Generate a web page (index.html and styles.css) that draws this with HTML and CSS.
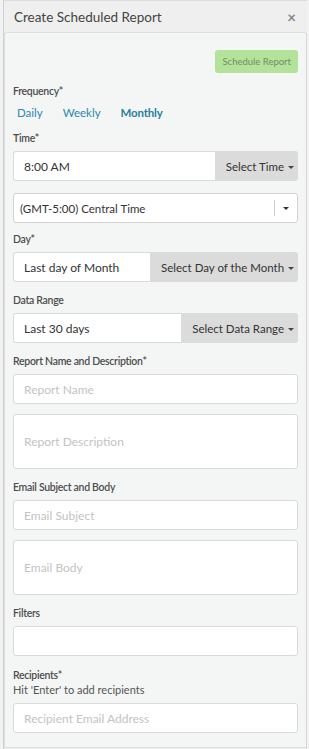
FILE: index.html
```html
<!DOCTYPE html>
<html lang="en">
<head>
    <meta charset="UTF-8">
    <meta name="viewport" content="width=device-width, initial-scale=1.0">
    <title>Create Scheduled Report</title>
    <link rel="stylesheet" href="styles.css">
</head>
<body>
    <div class="panel">
        <div class="panel-header">
            <span class="panel-title">Create Scheduled Report</span>
            <span class="close">&times;</span>
        </div>

        <div class="panel-body">
            <div class="actions">
                <button class="btn-schedule">Schedule Report</button>
            </div>

            <label class="field-label">Frequency*</label>
            <div class="tabs">
                <a class="tab">Daily</a>
                <a class="tab">Weekly</a>
                <a class="tab active">Monthly</a>
            </div>

            <label class="field-label">Time*</label>
            <div class="input-group">
                <input type="text" value="8:00 AM">
                <button class="btn-drop">Select Time <span class="caret"></span></button>
            </div>
            <div class="select">
                <span class="select-text">(GMT-5:00) Central Time</span>
                <span class="select-sep"></span>
                <span class="caret dark"></span>
            </div>

            <label class="field-label">Day*</label>
            <div class="input-group">
                <input type="text" value="Last day of Month">
                <button class="btn-drop">Select Day of the Month <span class="caret"></span></button>
            </div>

            <label class="field-label">Data Range</label>
            <div class="input-group">
                <input type="text" value="Last 30 days">
                <button class="btn-drop">Select Data Range <span class="caret"></span></button>
            </div>

            <label class="field-label">Report Name and Description*</label>
            <input class="field" type="text" placeholder="Report Name">
            <textarea class="field area" placeholder="Report Description"></textarea>

            <label class="field-label">Email Subject and Body</label>
            <input class="field" type="text" placeholder="Email Subject">
            <textarea class="field area" placeholder="Email Body"></textarea>

            <label class="field-label">Filters</label>
            <input class="field" type="text">

            <label class="field-label tight">Recipients*</label>
            <div class="hint">Hit 'Enter' to add recipients</div>
            <input class="field" type="text" placeholder="Recipient Email Address">
        </div>
    </div>
</body>
</html>
```

FILE: styles.css
```css
body {
    margin: 0;
    background-color: #f2f2f2;
    font-family: Lato, "Liberation Sans", sans-serif;
    color: #444;
}
.panel {
    width: 303px;
    margin-left: 3px;
    border-left: 1px solid #d0d0d0;
    border-top: 1px solid #dcdcdc;
    height: 748px;
    background-color: #efefef;
}
.panel-header {
    display: flex;
    justify-content: space-between;
    align-items: center;
    height: 31px;
    padding: 0 11px 0 10px;
    background-color: #efefef;
}
.panel-title {
    font-size: 13.5px;
    color: #444;
}
.close {
    font-size: 15px;
    color: #888;
    font-weight: bold;
}
.panel-body {
    background-color: #f4f5f5;
    border: 1px solid #dedede;
    border-right: 1px solid #d6d6d6;
    border-radius: 3px 3px 0 0;
    padding: 17px 8px 0 8px;
    height: 716px;
    box-sizing: border-box;
    display: flex;
    flex-direction: column;
}
.actions {
    display: flex;
    justify-content: flex-end;
    margin-bottom: 12px;
}
.btn-schedule {
    background-color: #b3e29b;
    color: #6f8f66;
    border: none;
    border-radius: 3px;
    font-family: inherit;
    font-size: 9.5px;
    height: 23px;
    padding: 0 7px;
}
.field-label {
    font-size: 10.5px;
    font-weight: 600;
    letter-spacing: -0.3px;
    color: #4d4d4d;
    margin-bottom: 7px;
}
.field:not(.area) + .field-label {
    margin-top: 3px;
}
.field-label.tight {
    margin-bottom: 2px;
}
.hint {
    font-size: 11px;
    color: #555;
    margin-bottom: 7px;
}
.tabs {
    display: flex;
    margin: 2px 0 13px 0;
}
.tab {
    font-size: 11.5px;
    color: #2f88ad;
    padding: 0 4px;
    margin-right: 12px;
}
.tab.active {
    font-weight: bold;
    color: #2b7fa3;
    letter-spacing: -0.2px;
}
.input-group {
    display: flex;
    height: 30px;
    margin-bottom: 12px;
}
.input-group input {
    flex: 1;
    min-width: 0;
    border: 1px solid #dadada;
    border-right: none;
    border-radius: 3px 0 0 3px;
    padding: 0 10px;
    font-family: inherit;
    font-size: 12px;
    color: #333;
    background-color: #fff;
}
.btn-drop {
    background-color: #dcdbdb;
    border: none;
    border-radius: 0 3px 3px 0;
    font-family: inherit;
    font-size: 11.5px;
    color: #333;
    padding: 0 4px 0 11px;
    white-space: nowrap;
}
.caret {
    display: inline-block;
    width: 0;
    height: 0;
    border-left: 3px solid transparent;
    border-right: 3px solid transparent;
    border-top: 3px solid #444;
    vertical-align: middle;
    margin-left: 1px;
}
.select {
    display: flex;
    align-items: center;
    height: 28px;
    border: 1px solid #d2d2d2;
    border-radius: 3px;
    background-color: #fff;
    padding: 0 8px 0 6px;
    margin-bottom: 10px;
    font-size: 11.5px;
    color: #333;
}
.select-text {
    flex: 1;
}
.select-sep {
    width: 1px;
    height: 16px;
    background-color: #ccc;
    margin-right: 7px;
}
.caret.dark {
    border-top-color: #333;
}
.field {
    height: 30px;
    border: 1px solid #dadada;
    border-radius: 3px;
    background-color: #fff;
    padding: 0 10px;
    font-family: inherit;
    font-size: 12px;
    box-sizing: border-box;
    margin: 0 0 10px 0;
    width: 100%;
}
.field.area {
    height: 55px;
    resize: none;
    padding-top: 19px;
    margin-bottom: 12px;
}
.field::placeholder {
    color: #c3c3c3;
}
```
